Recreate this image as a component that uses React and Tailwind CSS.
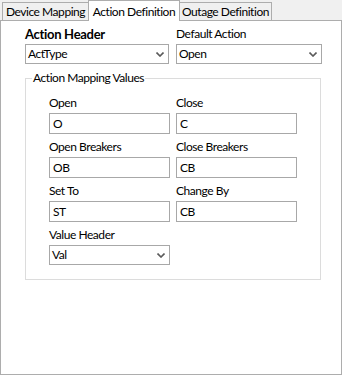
import React from "react";

function Chevron() {
  return (
    <svg width="8" height="5" viewBox="0 0 8 5" className="shrink-0">
      <path d="M0.5 0.5 L4 4 L7.5 0.5" fill="none" stroke="#5a5a5a" strokeWidth="1.6" />
    </svg>
  );
}

function Combo({ value, w }) {
  return (
    <div className={`${w} h-[20px] border border-[#a8a8a8] bg-white flex items-center justify-between pl-[2px] pr-[4px]`}>
      <span className="leading-[14px]">{value}</span>
      <Chevron />
    </div>
  );
}

function TextBox({ value }) {
  return (
    <div className="w-[121px] h-[21px] border border-[#a8a8a8] bg-white flex items-center pl-[3px]">
      <span className="leading-[14px]">{value}</span>
    </div>
  );
}

function Field({ label, children }) {
  return (
    <div className="flex flex-col gap-[3px]">
      <div className="h-[14px] leading-[14px] whitespace-nowrap">{label}</div>
      {children}
    </div>
  );
}

export default function App() {
  return (
    <div
      className="w-[342px] h-[375px] bg-[#f0f0f0] text-[12px] tracking-[-0.45px] text-black flex flex-col"
      style={{ fontFamily: "Lato, 'Noto Sans', sans-serif" }}
    >
      <div className="h-[20px] flex items-end pl-[2px] relative z-10">
        <div className="h-[18px] w-[86px] border-t border-l border-[#adadad] bg-[#f0f0f0] flex items-center justify-center whitespace-nowrap">
          Device Mapping
        </div>
        <div className="h-[21px] w-[92px] border-t border-l border-r border-[#adadad] bg-white flex items-start justify-center pt-[2px] -mb-[1px] whitespace-nowrap">
          Action Definition
        </div>
        <div className="h-[18px] w-[92px] border-t border-r border-[#adadad] bg-[#f0f0f0] flex items-center justify-center whitespace-nowrap">
          Outage Definition
        </div>
      </div>
      <div className="flex-1 border border-[#adadad] bg-white pl-[24px] pt-[6px]">
        <div className="flex gap-[7px]">
          <Field label={<span className="font-bold text-[13px] tracking-[-0.3px]">Action Header</span>}>
            <Combo value="ActType" w="w-[144px]" />
          </Field>
          <Field label="Default Action">
            <Combo value="Open" w="w-[146px]" />
          </Field>
        </div>
        <div className="mt-[14px] w-[296px] h-[202px] border border-[#dcdcdc] relative pl-[23px] pt-[17px]">
          <div className="absolute left-[6px] -top-[8px] bg-white px-[1px] h-[14px] leading-[14px] whitespace-nowrap">
            Action Mapping Values
          </div>
          <div className="grid grid-cols-[121px_121px] gap-x-[6px] gap-y-[6px]">
            <Field label="Open"><TextBox value="O" /></Field>
            <Field label="Close"><TextBox value="C" /></Field>
            <Field label="Open Breakers"><TextBox value="OB" /></Field>
            <Field label="Close Breakers"><TextBox value="CB" /></Field>
            <Field label="Set To"><TextBox value="ST" /></Field>
            <Field label="Change By"><TextBox value="CB" /></Field>
            <Field label="Value Header"><Combo value="Val" w="w-[121px]" /></Field>
          </div>
        </div>
      </div>
    </div>
  );
}
